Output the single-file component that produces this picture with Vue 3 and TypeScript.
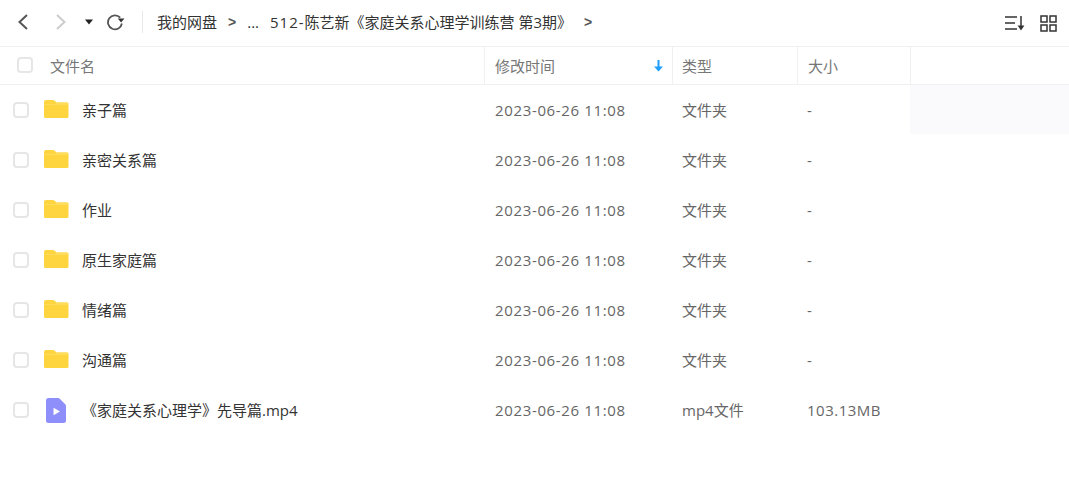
<script setup lang="ts">
interface Row { name: string; type: string; size: string; kind: 'folder' | 'video'; hover?: boolean }
const date = '2023-06-26 11:08'
const rows: Row[] = [
  { name: '亲子篇', type: '文件夹', size: '-', kind: 'folder', hover: true },
  { name: '亲密关系篇', type: '文件夹', size: '-', kind: 'folder' },
  { name: '作业', type: '文件夹', size: '-', kind: 'folder' },
  { name: '原生家庭篇', type: '文件夹', size: '-', kind: 'folder' },
  { name: '情绪篇', type: '文件夹', size: '-', kind: 'folder' },
  { name: '沟通篇', type: '文件夹', size: '-', kind: 'folder' },
  { name: '《家庭关系心理学》先导篇.mp4', type: 'mp4文件', size: '103.13MB', kind: 'video' },
]
</script>

<template>
  <div class="page">
    <div class="toolbar">
      <div class="nav">
        <svg class="back" width="14" height="18" viewBox="0 0 14 18"><path d="M11 2 L3.500 9 L11 16" fill="none" stroke="#555" stroke-width="2"/></svg>
        <svg class="forward" width="14" height="18" viewBox="0 0 14 18"><path d="M3 2 L10.500 9 L3 16" fill="none" stroke="#ccc" stroke-width="2"/></svg>
        <svg class="caret" width="8" height="6" viewBox="0 0 8 6"><path d="M0 0.500 H8 L4 5.500 Z" fill="#222"/></svg>
        <svg class="refresh" width="19" height="18" viewBox="0 0 19 18"><path d="M14.200 4.600 A7 7 0 1 0 15.900 10.500" fill="none" stroke="#555" stroke-width="1.800"/><path d="M11.800 5.600 H18.400 L15.100 9.400 Z" fill="#333"/></svg>
      </div>
      <div class="crumbs">
        <span>我的网盘</span>
        <span class="sep">&gt;</span>
        <span class="dots">...</span>
        <span class="current"><span class="num">512-</span>陈艺新《家庭关系心理学训练营 第3期》</span>
        <span class="sep last">&gt;</span>
      </div>
      <div class="tools">
        <svg width="22" height="18" viewBox="0 0 22 18"><path d="M1 3 H13 M1 9 H11 M1 15 H13" stroke="#333" stroke-width="1.500" fill="none"/><path d="M17 2 V14" stroke="#333" stroke-width="1.500"/><path d="M13.600 11.500 H20.400 L17 16.500 Z" fill="#333"/></svg>
        <svg width="17" height="17" viewBox="0 0 17 17"><g fill="none" stroke="#333" stroke-width="1.500"><rect x="1" y="1" width="6" height="6"/><rect x="10" y="1" width="6" height="6"/><rect x="1" y="10" width="6" height="6"/><rect x="10" y="10" width="6" height="6"/></g></svg>
      </div>
    </div>

    <div class="head grid">
      <div class="cell first">
        <span class="check head-check"></span>
        <span>文件名</span>
      </div>
      <div class="cell divided sort">
        <span>修改时间</span>
        <svg width="9" height="12" viewBox="0 0 9 12"><path d="M4.500 0 V8" stroke="#1e9fff" stroke-width="2"/><path d="M0 6.500 H9 L4.500 11.500 Z" fill="#1e9fff"/></svg>
      </div>
      <div class="cell divided type-head">类型</div>
      <div class="cell divided">大小</div>
      <div class="cell divided"></div>
    </div>

    <div v-for="row in rows" :key="row.name" class="row grid">
      <div class="cell name-cell">
        <span class="check"></span>
        <svg v-if="row.kind === 'folder'" class="icon" width="26" height="20" viewBox="0 0 26 20"><path d="M1 3 Q1 1 3 1 H9.500 Q11 1 12 2 L13.500 3.500 H24 Q25.500 3.500 25.500 5 V17.500 Q25.500 19 24 19 H2.500 Q1 19 1 17.500 Z" fill="#ffd53f"/><path d="M1 5 H12 L13.500 3.500 H24 Q25.500 3.500 25.500 5 V6 H1 Z" fill="#ffdc5c"/></svg>
        <svg v-else class="icon video" width="20" height="25" viewBox="0 0 20 25"><path d="M2.500 0 H12 Q13 0 14 1 L19 6 Q20 7 20 8 V22.500 Q20 25 17.500 25 H2.500 Q0 25 0 22.500 V2.500 Q0 0 2.500 0 Z" fill="#8f8ffb"/><path d="M7.500 9.800 L14 13.500 L7.500 17.200 Z" fill="#fff"/></svg>
        <span class="name" :class="{ 'name-video': row.kind === 'video' }">{{ row.name }}</span>
      </div>
      <div class="cell muted date">{{ date }}</div>
      <div class="cell muted"><span class="raised">{{ row.type }}</span></div>
      <div class="cell muted size">{{ row.size }}</div>
      <div class="filler" :class="{ hover: row.hover }"></div>
    </div>
  </div>
</template>

<style scoped>
.page {
  width: 1069px;
  height: 495px;
  background: #fff;
  overflow: hidden;
  font-family: "Open Sans", "Noto Sans CJK SC", sans-serif;
  font-size: 15px;
  color: #333;
}
.toolbar {
  height: 47px;
  box-sizing: border-box;
  display: flex;
  align-items: center;
  border-bottom: 1px solid #f0f0f0;
  padding-bottom: 2px;
}
.nav {
  display: flex;
  align-items: center;
  width: 143px;
  height: 22px;
  border-right: 1px solid #e8e8e8;
  box-sizing: border-box;
  padding-left: 16px;
}
.forward { margin-left: 24px; }
.caret { margin-left: 17px; }
.refresh { margin-left: 13px; }
.crumbs {
  display: flex;
  align-items: center;
  margin-left: 14px;
  color: #333;
  white-space: nowrap;
  padding-bottom: 1px;
}
.num { letter-spacing: 1px; }
.sep {
  margin-left: 11px;
  font-weight: 700;
  font-size: 14px;
  color: #555;
  font-family: "Liberation Sans", sans-serif;
}
.dots { margin-left: 11px; }
.current { margin-left: 11px; }
.sep.last { margin-left: 12px; }
.tools {
  margin-left: auto;
  display: flex;
  align-items: center;
  gap: 14px;
  padding-right: 12px;
  margin-top: 2px;
}
.grid {
  display: grid;
  grid-template-columns: 484px 188px 125px 113px 159px;
}
.head {
  height: 38px;
  box-sizing: border-box;
  border-bottom: 1px solid #f0f0f0;
  color: #777;
}
.cell {
  display: flex;
  align-items: center;
  padding-left: 10px;
  min-width: 0;
  white-space: nowrap;
}
.divided { border-left: 1px solid #f0f0f0; }
.type-head { padding-left: 9px; }
.first { padding-left: 17px; }
.sort { justify-content: space-between; padding-right: 9px; }
.check {
  flex: none;
  width: 16px;
  height: 16px;
  box-sizing: border-box;
  border: 2px solid #e6e6e6;
  border-radius: 4px;
  background: #fff;
}
.head-check { margin-right: 17px; margin-bottom: 2px; }
.row { height: 50px; }
.name-cell { padding-left: 13px; }
.icon { flex: none; margin-left: 14px; margin-top: -2px; }
.video { margin-left: 17px; margin-top: 0; }
.name { margin-left: 13px; margin-bottom: 2px; }
.name-video { margin-left: 16px; }
.raised { margin-bottom: 2px; }
.muted { color: #666; }
.date { letter-spacing: 0.65px; padding-left: 11px; }
.size { letter-spacing: 0.5px; }
.filler.hover { background: #fafafc; margin-bottom: 1px; }
</style>
